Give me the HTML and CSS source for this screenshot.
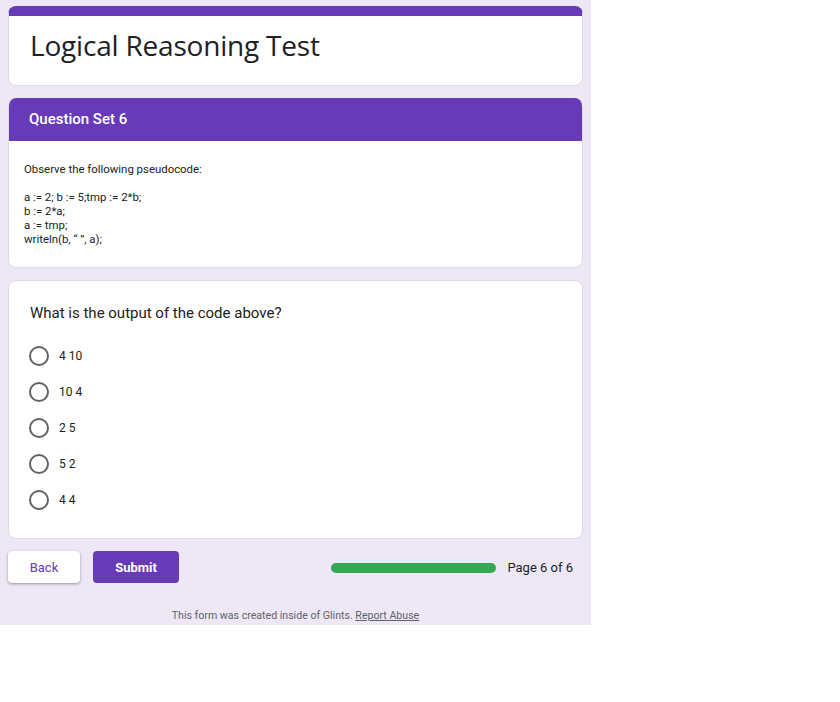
FILE: index.html
```html
<!DOCTYPE html>
<html>
<head>
<meta charset="utf-8">
<link rel="stylesheet" href="styles.css">
</head>
<body>
<div class="page">
  <div class="card title-card">
    <h1 class="title">Logical Reasoning Test</h1>
  </div>
  <div class="card section-card">
    <div class="section-head">Question Set 6</div>
    <div class="section-body">
      <p class="desc">Observe the following pseudocode:</p>
      <p class="code">a := 2; b := 5;tmp := 2*b;<br>b := 2*a;<br>a := tmp;<br>writeln(b, “ ”, a);</p>
    </div>
  </div>
  <div class="card question-card">
    <div class="question">What is the output of the code above?</div>
    <div class="options">
      <label class="option"><span class="radio"></span><span class="opt-text">4 10</span></label>
      <label class="option"><span class="radio"></span><span class="opt-text">10 4</span></label>
      <label class="option"><span class="radio"></span><span class="opt-text">2 5</span></label>
      <label class="option"><span class="radio"></span><span class="opt-text">5 2</span></label>
      <label class="option"><span class="radio"></span><span class="opt-text">4 4</span></label>
    </div>
  </div>
  <div class="nav">
    <button class="btn btn-back">Back</button>
    <button class="btn btn-submit">Submit</button>
    <div class="progress">
      <div class="bar"></div>
      <span class="page-num">Page 6 of 6</span>
    </div>
  </div>
  <div class="footer">This form was created inside of Glints. <a class="abuse">Report Abuse</a></div>
</div>
</body>
</html>
```
FILE: styles.css
```css
* { box-sizing: border-box; }
html, body { margin: 0; padding: 0; background: #fff; }
body { font-family: Roboto, "Liberation Sans", Arial, sans-serif; color: #202124; }
.page {
  width: 591px;
  height: 625px;
  background: #ede7f6;
  padding: 6px 8px 0 8px;
}
.card {
  background: #fff;
  border: 1px solid #dadce0;
  border-radius: 8px;
  margin-bottom: 12px;
  overflow: hidden;
}
.title-card {
  border-top: 10px solid #673ab7;
  height: 80px;
  padding: 11px 21px 0 21px;
}
.title {
  margin: 0;
  font-family: "Open Sans", Roboto, sans-serif;
  font-weight: 400;
  font-size: 28px;
  line-height: 36px;
  color: #202124;
  letter-spacing: -0.2px;
}
.section-card { height: 170px; border-top: none; }
.section-head {
  background: #673ab7;
  color: #fff;
  height: 43px;
  padding: 0 20px;
  font-size: 15px;
  font-weight: 500;
  line-height: 43px;
}
.section-body { padding: 21px 15px 0 15px; font-size: 11.4px; color: #202124; }
.desc { margin: 0 0 14px 0; line-height: 14px; }
.code { margin: 0; line-height: 14px; }
.question-card { height: 259px; padding: 22px 21px 0 20px; }
.question { font-size: 15px; line-height: 20px; color: #202124; padding-left: 1px; }
.options { margin-top: 23px; display: flex; flex-direction: column; gap: 16px; }
.option { display: flex; align-items: center; height: 20px; }
.radio {
  width: 20px; height: 20px;
  border: 2px solid #5f6368;
  border-radius: 50%;
  margin: 0 10px 0 0;
}
.opt-text { font-size: 12px; color: #202124; }
.nav { display: flex; align-items: center; height: 32px; }
.btn {
  height: 32px;
  border-radius: 4px;
  border: none;
  font-family: Roboto, sans-serif;
  font-size: 13px;
  padding: 0;
}
.btn-back {
  width: 72px;
  background: #fff;
  color: #673ab7;
  box-shadow: 0 1px 2px rgba(60,64,67,.3), 0 1px 3px 1px rgba(60,64,67,.15);
}
.btn-submit {
  width: 86px;
  margin-left: 13px;
  background: #673ab7;
  color: #fff;
  font-weight: 700;
}
.progress { margin-left: auto; display: flex; align-items: center; padding-right: 10px; }
.bar { width: 165px; height: 10px; border-radius: 5px; background: #34a853; margin-right: 11px; margin-top: 2px; }
.page-num { font-size: 13px; color: #202124; }
.footer {
  text-align: center;
  font-size: 10.6px;
  color: #5f6368;
  margin-top: 26px;
}
.abuse { color: #5f6368; text-decoration: underline; }
```
